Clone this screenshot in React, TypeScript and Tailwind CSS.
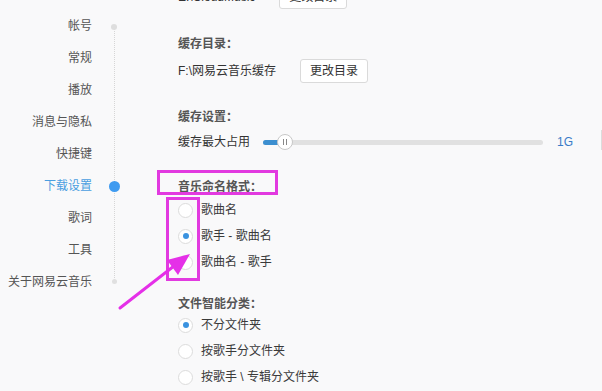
const navItems = ["帐号", "常规", "播放", "消息与隐私", "快捷键", "下载设置", "歌词", "工具", "关于网易云音乐"];

const font = { fontFamily: '"Liberation Sans", "Noto Sans CJK SC", sans-serif' };

function Radio({ checked, label }: { checked?: boolean; label: string }) {
  return (
    <div className="flex h-[26px] items-center">
      <span className="flex h-[15px] w-[15px] items-center justify-center rounded-full border border-[#dcdcdc] bg-white">
        {checked && <span className="h-[6px] w-[6px] rounded-full bg-[#3b93e0]" />}
      </span>
      <span className="ml-[8px] text-[12px] text-[#3a3a3a]">{label}</span>
    </div>
  );
}

function Heading({ children }: { children: string }) {
  return <div className="flex h-[20px] items-center text-[12px] font-bold text-[#555]">{children}</div>;
}

function ChangeButton() {
  return (
    <button className="ml-[24px] h-[24px] w-[68px] rounded-[3px] border border-[#dadada] bg-white text-[12px] text-[#333]">
      更改目录
    </button>
  );
}

export default function App() {
  return (
    <div className="relative h-[391px] w-[602px] overflow-hidden bg-[#f9f9fa]" style={font}>
      <div className="flex">
        <div className="w-[92px] pt-[10px] text-right">
          {navItems.map((item) => (
            <div
              key={item}
              className={`flex h-[32px] items-center justify-end text-[12px] ${
                item === "下载设置" ? "text-[#4a9ee0]" : "text-[#555]"
              }`}
            >
              {item}
            </div>
          ))}
        </div>

        <div className="relative w-[86px]">
          <div className="absolute left-[21.5px] top-[27px] h-[255px] border-l border-dotted border-[#d6d6d6]" />
          <div className="absolute left-[19px] top-[24px] h-[6px] w-[6px] rounded-full bg-[#dedede]" />
          <div className="absolute left-[17px] top-[181px] h-[11px] w-[11px] rounded-full bg-[#3f9bf0]" />
          <div className="absolute left-[19.5px] top-[279px] h-[5px] w-[5px] rounded-full bg-[#e0e0e0]" />
        </div>

        <div className="flex-1 text-[12px] text-[#333]">
          <div className="mt-[-15px] flex h-[24px] items-center">
            <span>E:\CloudMusic</span>
            <ChangeButton />
          </div>
          <div className="mt-[25px]">
            <Heading>缓存目录：</Heading>
          </div>
          <div className="mt-[5px] flex h-[24px] items-center">
            <span>F:\网易云音乐缓存</span>
            <ChangeButton />
          </div>
          <div className="mt-[24px]">
            <Heading>缓存设置：</Heading>
          </div>
          <div className="mt-[5px] flex h-[20px] items-center">
            <span>缓存最大占用</span>
            <div className="relative ml-[13px] h-[5px] w-[280px] rounded-full bg-[#e1e1e1]">
              <div className="h-full w-[22px] rounded-l-full bg-[#3c8fd0]" />
              <div className="absolute left-[14px] top-[-6px] flex h-[16px] w-[16px] items-center justify-center gap-[2px] rounded-full border border-[#c8c8c8] bg-white">
                <span className="h-[6px] w-px bg-[#888]" />
                <span className="h-[6px] w-px bg-[#888]" />
              </div>
            </div>
            <span className="ml-[14px] text-[12px] text-[#3a7cc8]">1G</span>
          </div>
          <div className="mt-[25px]">
            <Heading>音乐命名格式：</Heading>
          </div>
          <Radio label="歌曲名" />
          <Radio checked label="歌手 - 歌曲名" />
          <Radio label="歌曲名 - 歌手" />
          <div className="mt-[19px]">
            <Heading>文件智能分类：</Heading>
          </div>
          <div className="mt-[-2px]">
            <Radio checked label="不分文件夹" />
            <Radio label="按歌手分文件夹" />
            <Radio label="按歌手 \ 专辑分文件夹" />
          </div>
        </div>
      </div>

      <div className="absolute right-0 top-[130px] h-[20px] w-px bg-[#dcdcdc]" />

      <div className="absolute left-[157px] top-[170px] h-[25px] w-[121px] border-[3px] border-[#e23ae0]" />
      <div className="absolute left-[166px] top-[197px] h-[84px] w-[34px] border-[3px] border-[#e23ae0]" />
      <svg className="absolute left-0 top-0" width="602" height="391" viewBox="0 0 602 391">
        <line x1="120" y1="308" x2="174" y2="266" stroke="#e530e8" strokeWidth="3" strokeLinecap="round" />
        <polygon points="190,254 178,275 167,260" fill="#e530e8" />
      </svg>
    </div>
  );
}
